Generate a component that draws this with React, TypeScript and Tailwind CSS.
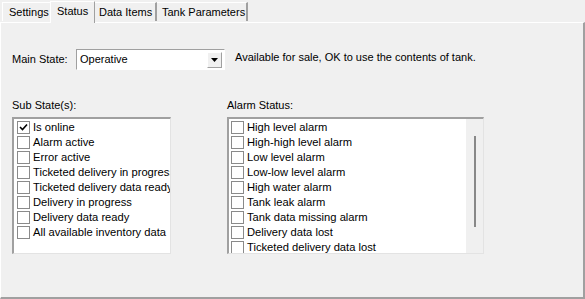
import React from "react";

const subStates = [
  { label: "Is online", checked: true },
  { label: "Alarm active" },
  { label: "Error active" },
  { label: "Ticketed delivery in progress" },
  { label: "Ticketed delivery data ready" },
  { label: "Delivery in progress" },
  { label: "Delivery data ready" },
  { label: "All available inventory data" },
];

const alarms = [
  "High level alarm",
  "High-high level alarm",
  "Low level alarm",
  "Low-low level alarm",
  "High water alarm",
  "Tank leak alarm",
  "Tank data missing alarm",
  "Delivery data lost",
  "Ticketed delivery data lost",
];

function Box({ checked }: { checked?: boolean }) {
  return (
    <span className="w-[13px] h-[13px] border border-[#8a8a8a] bg-white flex items-center justify-center shrink-0">
      {checked && (
        <svg width="9" height="9" viewBox="0 0 9 9">
          <path d="M1 4 L3.5 6.5 L8 1.5" stroke="#000" strokeWidth="1.6" fill="none" />
        </svg>
      )}
    </span>
  );
}

function Row({ label, checked, pl }: { label: string; checked?: boolean; pl: string }) {
  return (
    <div className={`h-[15px] flex items-center gap-[3px] whitespace-nowrap ${pl}`}>
      <Box checked={checked} />
      <span className="text-[11.2px] text-[#000]">{label}</span>
    </div>
  );
}

export default function App() {
  return (
    <div
      className="w-[585px] h-[299px] bg-[#f0f0f0] flex flex-col text-[11px] leading-[13px] text-black overflow-hidden"
      style={{ fontFamily: '"Liberation Sans", Arial, sans-serif' }}
    >
      {/* tabs */}
      <div className="h-[22px] flex items-end pl-[2px] relative z-10 whitespace-nowrap">
        <div className="h-[19px] w-[48px] border-l border-t border-white flex items-center pl-[6px] mb-[1px]">Settings</div>
        <div className="h-[22px] w-[45px] bg-[#f0f0f0] border-l border-t border-white border-r border-r-[#a0a0a0] flex items-start pt-[3px] pl-[6px] -mb-[1px] relative">
          Status
        </div>
        <div className="h-[19px] w-[62px] border-t border-white border-r-2 border-r-[#a0a0a0] flex items-center pl-[4px] mb-[1px]">Data Items</div>
        <div className="h-[19px] w-[91px] border-t border-white border-r-2 border-r-[#a0a0a0] flex items-center pl-[5px] mb-[1px]">Tank Parameters</div>
      </div>
      {/* panel */}
      <div className="flex-1 border-t border-l border-white border-r-2 border-b-2 border-r-[#a0a0a0] border-b-[#a0a0a0] flex flex-col">
        <div className="flex items-center h-[21px] mt-[26px]">
          <span className="ml-[11px] w-[64px]">Main State:</span>
          <div className="w-[149px] h-[21px] bg-white border border-[#a0a0a0] border-b-white border-r-white flex items-center">
            <span className="flex-1 pl-[3px]">Operative</span>
            <div className="w-[15px] h-[16px] mr-[2px] bg-[#f0f0f0] border border-[#a0a0a0] border-t-white border-l-white flex items-center justify-center">
              <svg width="7" height="4" viewBox="0 0 7 4">
                <path d="M0 0 H7 L3.5 4 Z" fill="#000" />
              </svg>
            </div>
          </div>
          <span className="ml-[10px] -mt-[5px]">Available for sale, OK to use the contents of tank.</span>
        </div>
        <div className="flex mt-[29px]">
          <div className="ml-[11px] flex flex-col">
            <span className="h-[14px]">Sub State(s):</span>
            <div className="mt-[4px] w-[159px] h-[137px] bg-white border-t-2 border-l-2 border-t-[#a0a0a0] border-l-[#a0a0a0] border-r border-b border-r-[#e3e3e3] border-b-[#e3e3e3] overflow-hidden pt-[1px]">
              {subStates.map((s) => (
                <Row key={s.label} label={s.label} checked={s.checked} pl="pl-[3px]" />
              ))}
            </div>
          </div>
          <div className="ml-[56px] flex flex-col">
            <span className="h-[14px]">Alarm Status:</span>
            <div className="mt-[4px] w-[257px] h-[137px] bg-white border-t-2 border-l-2 border-t-[#a0a0a0] border-l-[#a0a0a0] border-r border-b border-r-[#e3e3e3] border-b-[#e3e3e3] overflow-hidden flex">
              <div className="flex-1 pt-[1px] overflow-hidden">
                {alarms.map((a) => (
                  <Row key={a} label={a} pl="pl-[2px]" />
                ))}
              </div>
              <div className="w-[17px] bg-[#f0f0f0] flex justify-center pt-[17px]">
                <div className="w-[2px] h-[91px] bg-[#888]" />
              </div>
            </div>
          </div>
        </div>
      </div>
    </div>
  );
}
